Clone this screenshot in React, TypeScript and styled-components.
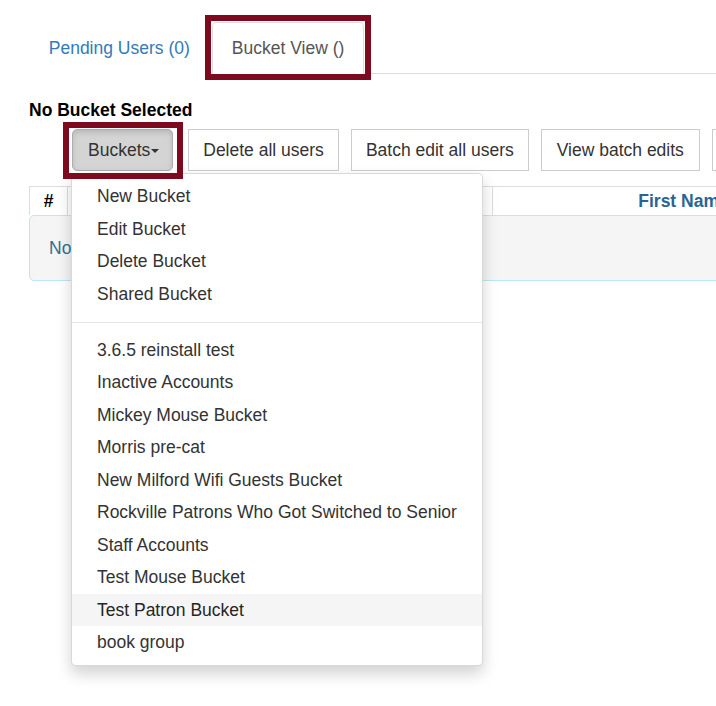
import React from "react";
import styled, { createGlobalStyle } from "styled-components";

const GlobalStyle = createGlobalStyle`
    body {
        margin: 0;
        overflow: hidden;
        font-family: "Liberation Sans", Arial, sans-serif;
        font-size: 17.5px;
        line-height: 25px;
        color: #333;
        background: #fff;
    }
`;

const Page = styled.div`
    width: 716px;
    height: 706px;
    overflow: hidden;
    padding: 22px 0 0 29px;
    box-sizing: border-box;
`;

const Content = styled.div`
    width: 960px;
`;

const TabList = styled.div`
    display: flex;
    gap: 2.5px;
    border-bottom: 1px solid #ddd;
`;

/* rectangulo vermelho de anotacao por cima do elemento */
const Annotated = `
    &::after {
        content: "";
        position: absolute;
        border: 6px solid #7d0a1e;
        pointer-events: none;
        z-index: 5;
    }
`;

const Tab = styled.div<{ $active?: boolean }>`
    position: relative;
    padding: 12.5px 18.75px;
    margin-bottom: -1px;
    border: 1px solid ${(p) => (p.$active ? "#ddd" : "transparent")};
    border-bottom-color: transparent;
    border-radius: 5px 5px 0 0;
    background: #fff;
    color: ${(p) => (p.$active ? "#555" : "#337ab7")};

    ${(p) => (p.$active ? Annotated : "")}
    &::after {
        inset: -8px -8px -7px -8px;
    }
`;

const Heading = styled.div`
    margin-top: 23.5px;
    font-weight: bold;
    color: #000;
`;

const Toolbar = styled.div`
    display: flex;
    gap: 12px;
    margin-top: 6.5px;
    padding-left: 43px;
`;

const DropdownWrap = styled.div`
    position: relative;
    margin-right: 3px;
`;

const Button = styled.div<{ $tight?: boolean }>`
    padding: 7.5px ${(p) => (p.$tight ? "14px" : "15px")};
    border: 1px solid #ccc;
    background: #fff;
    color: #333;
    white-space: nowrap;
`;

const BucketsButton = styled(Button)`
    position: relative;
    display: flex;
    align-items: center;
    padding-right: 13px;
    background: #d4d4d4;
    border-color: #adadad;
    border-radius: 5px;
    box-shadow: inset 0 3px 5px rgba(0, 0, 0, 0.125);

    ${Annotated}
    &::after {
        inset: -8px -11px -9px -10px;
    }
`;

const Caret = styled.span`
    display: inline-block;
    width: 0;
    height: 0;
    margin-left: 1px;
    margin-top: 2px;
    border-top: 4px solid #333;
    border-left: 4px solid transparent;
    border-right: 4px solid transparent;
`;

const Menu = styled.div`
    position: absolute;
    top: 100%;
    left: -1px;
    margin-top: 2px;
    padding: 6.25px 0;
    background: #fff;
    border: 1px solid rgba(0, 0, 0, 0.15);
    border-radius: 5px;
    box-shadow: 0 7.5px 15px rgba(0, 0, 0, 0.175);
    z-index: 4;
`;

const MenuItem = styled.div<{ $hover?: boolean }>`
    padding: 3.75px 25px;
    white-space: nowrap;
    color: ${(p) => (p.$hover ? "#262626" : "#333")};
    background: ${(p) => (p.$hover ? "#f5f5f5" : "transparent")};
`;

const Divider = styled.div`
    height: 1px;
    margin: 11.25px 0;
    background: #e5e5e5;
`;

const Table = styled.div`
    margin-top: 15px;
`;

const HeadRow = styled.div`
    display: flex;
`;

const HeadCell = styled.div<{ $width: number; $link?: boolean }>`
    width: ${(p) => p.$width}px;
    height: 29px;
    line-height: 29px;
    box-sizing: border-box;
    border: 1px solid #ddd;
    border-bottom: none;
    margin-left: -1px;
    text-align: center;
    font-weight: bold;
    color: ${(p) => (p.$link ? "#2a6496" : "#000")};

    &:first-child {
        margin-left: 0;
    }
`;

const InfoBox = styled.div`
    height: 64px;
    line-height: 64px;
    padding: 0 19px;
    border: 1px solid #bce8f1;
    border-radius: 5px;
    background: #f5f5f5;
    color: #31708f;
`;

const fixedItems = ["New Bucket", "Edit Bucket", "Delete Bucket", "Shared Bucket"];

const buckets = [
    "3.6.5 reinstall test",
    "Inactive Accounts",
    "Mickey Mouse Bucket",
    "Morris pre-cat",
    "New Milford Wifi Guests Bucket",
    "Rockville Patrons Who Got Switched to Senior",
    "Staff Accounts",
    "Test Mouse Bucket",
    "Test Patron Bucket",
    "book group",
];

const App: React.FC = () => {
    return (
        <Page>
            <GlobalStyle />
            <Content>
                <TabList>
                    <Tab>Pending Users (0)</Tab>
                    <Tab $active>Bucket View ()</Tab>
                </TabList>

                <Heading>No Bucket Selected</Heading>

                <Toolbar>
                    <DropdownWrap>
                        <BucketsButton>
                            Buckets
                            <Caret />
                        </BucketsButton>
                        <Menu>
                            {fixedItems.map((item) => (
                                <MenuItem key={item}>{item}</MenuItem>
                            ))}
                            <Divider />
                            {buckets.map((item) => (
                                <MenuItem key={item} $hover={item === "Test Patron Bucket"}>
                                    {item}
                                </MenuItem>
                            ))}
                        </Menu>
                    </DropdownWrap>
                    <Button $tight>Delete all users</Button>
                    <Button $tight>Batch edit all users</Button>
                    <Button>View batch edits</Button>
                    <Button>Export users</Button>
                </Toolbar>

                <Table>
                    <HeadRow>
                        <HeadCell $width={39}>#</HeadCell>
                        <HeadCell $width={426}>Username</HeadCell>
                        <HeadCell $width={383} $link>
                            First Name
                        </HeadCell>
                    </HeadRow>
                    <InfoBox>No users in this bucket.</InfoBox>
                </Table>
            </Content>
        </Page>
    );
};

export default App;
